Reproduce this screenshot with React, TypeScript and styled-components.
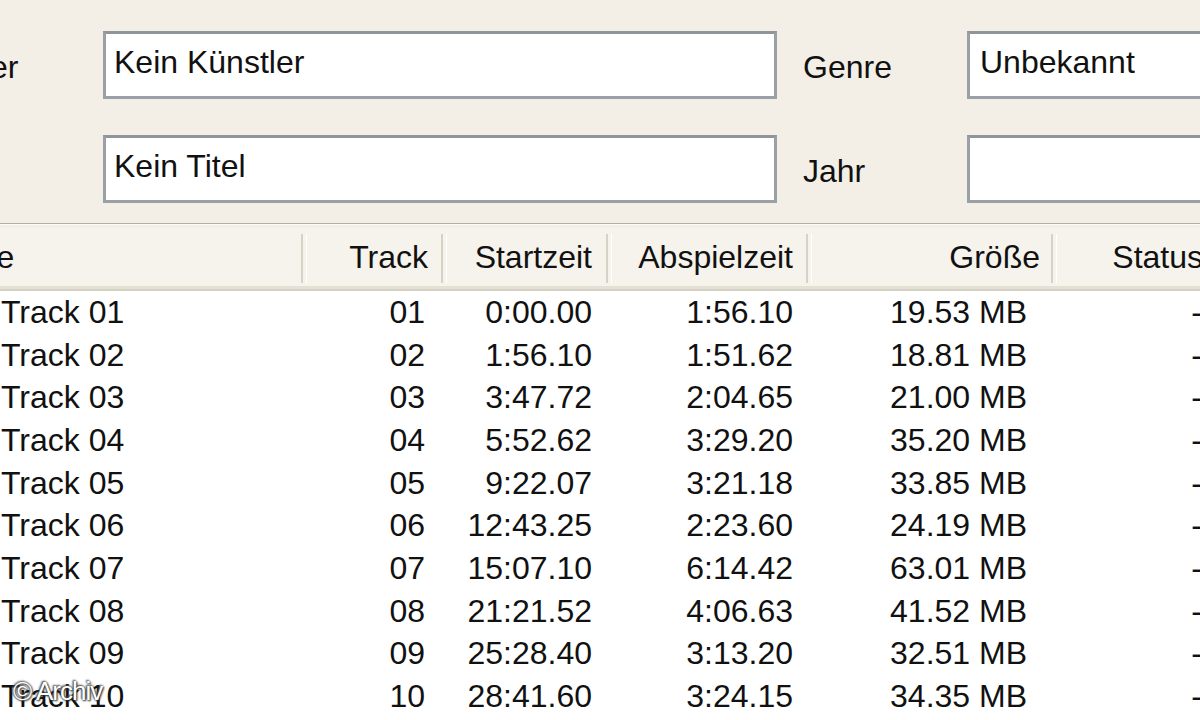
import React from 'react';
import styled, { createGlobalStyle } from 'styled-components';

const GlobalStyle = createGlobalStyle`
  html, body {
    margin: 0;
    padding: 0;
    overflow: hidden;
    background: #f3efe6;
  }
  * {
    box-sizing: border-box;
  }
`;

const Window = styled.div`
  position: relative;
  width: 1200px;
  height: 720px;
  overflow: hidden;
  background: #f3efe6;
  font-family: 'Liberation Sans', Arial, sans-serif;
  font-size: 32px;
  color: #111;
`;

// the screenshot is a crop of a larger dialog, so the content starts left of the viewport
const Content = styled.div`
  width: 1400px;
  margin-left: -160px;
`;

const Form = styled.div`
  display: grid;
  grid-template-columns: 176px 674px 138px 300px;
  grid-auto-rows: 68px;
  column-gap: 26px;
  row-gap: 36px;
  padding: 31px 0 0 61px;
`;

const Label = styled.div`
  display: flex;
  align-items: center;
  padding-top: 4px;
  white-space: nowrap;
`;

const Field = styled.div<{ $pad?: number }>`
  display: flex;
  align-items: center;
  padding: 0 0 6px ${({ $pad }) => $pad ?? 8}px;
  background: #fff;
  border: 3px solid #9aa1a6;
  border-top-color: #8e969c;
  white-space: nowrap;
`;

const Separator = styled.div`
  margin-top: 20px;
  height: 2px;
  background: #b2aea3;
  border-bottom: 1px solid #fbfaf6;
`;

const Table = styled.div`
  margin-top: 3px;
  background: #fff;
`;

const HeaderRow = styled.div`
  display: flex;
  height: 63px;
  background: #f5f3ec;
  border-bottom: 2px solid #d4d0c2;
  box-shadow: inset 0 -3px 0 #e4e0d3;
`;

const HeadCell = styled.div<{ $w: number; $pad: number; $left?: boolean }>`
  position: relative;
  flex: 0 0 ${({ $w }) => $w}px;
  display: flex;
  align-items: center;
  justify-content: ${({ $left }) => ($left ? 'flex-start' : 'flex-end')};
  padding: ${({ $left, $pad }) => ($left ? `0 0 2px ${$pad}px` : `0 ${$pad}px 2px 0`)};
  white-space: nowrap;

  &::after {
    content: '';
    position: absolute;
    top: 6px;
    bottom: 6px;
    right: -2px;
    width: 3px;
    border-left: 2px solid #d6d2c5;
    border-right: 1px solid #ffffff;
  }
`;

const Row = styled.div`
  display: flex;
  height: 42.7px;
  background: #fff;
`;

const Cell = styled.div<{ $w: number; $pad: number; $left?: boolean }>`
  flex: 0 0 ${({ $w }) => $w}px;
  display: flex;
  align-items: center;
  justify-content: ${({ $left }) => ($left ? 'flex-start' : 'flex-end')};
  padding: ${({ $left, $pad }) => ($left ? `0 0 0 ${$pad}px` : `0 ${$pad}px 0 0`)};
  white-space: nowrap;
`;

const Watermark = styled.div`
  position: absolute;
  left: 13px;
  top: 676px;
  font-family: 'Liberation Sans', Arial, sans-serif;
  font-size: 26px;
  letter-spacing: -1px;
  color: #fff;
  text-shadow: 0 0 2px #333, 1px 1px 2px #222, -1px -1px 2px #555;
`;

type Column = { key: string; title: string; width: number; headPad: number; cellPad: number; left?: boolean };

const columns: Column[] = [
  { key: 'name', title: 'Name', width: 465, headPad: 89, cellPad: 161, left: true },
  { key: 'track', title: 'Track', width: 140, headPad: 17, cellPad: 20 },
  { key: 'start', title: 'Startzeit', width: 165, headPad: 18, cellPad: 18 },
  { key: 'length', title: 'Abspielzeit', width: 200, headPad: 17, cellPad: 17 },
  { key: 'size', title: 'Größe', width: 245, headPad: 15, cellPad: 28 },
  { key: 'status', title: 'Status', width: 165, headPad: 17, cellPad: 18 },
];

const tracks = [
  ['01', '0:00.00', '1:56.10', '19.53 MB'],
  ['02', '1:56.10', '1:51.62', '18.81 MB'],
  ['03', '3:47.72', '2:04.65', '21.00 MB'],
  ['04', '5:52.62', '3:29.20', '35.20 MB'],
  ['05', '9:22.07', '3:21.18', '33.85 MB'],
  ['06', '12:43.25', '2:23.60', '24.19 MB'],
  ['07', '15:07.10', '6:14.42', '63.01 MB'],
  ['08', '21:21.52', '4:06.63', '41.52 MB'],
  ['09', '25:28.40', '3:13.20', '32.51 MB'],
  ['10', '28:41.60', '3:24.15', '34.35 MB'],
  ['11', '32:05.75', '2:58.40', '30.02 MB'],
];

export default function App() {
  return (
    <Window>
      <GlobalStyle />
      <Content>
        <Form>
          <Label>Künstler</Label>
          <Field>Kein Künstler</Field>
          <Label>Genre</Label>
          <Field $pad={10}>Unbekannt</Field>
          <Label>Album</Label>
          <Field>Kein Titel</Field>
          <Label>Jahr</Label>
          <Field />
        </Form>
        <Separator />
        <Table>
          <HeaderRow>
            {columns.map((c) => (
              <HeadCell key={c.key} $w={c.width} $pad={c.headPad} $left={c.left}>
                {c.title}
              </HeadCell>
            ))}
          </HeaderRow>
          {tracks.map(([nr, start, length, size]) => {
            const values = [`Track ${nr}`, nr, start, length, size, '-'];
            return (
              <Row key={nr}>
                {columns.map((c, i) => (
                  <Cell key={c.key} $w={c.width} $pad={c.cellPad} $left={c.left}>
                    {values[i]}
                  </Cell>
                ))}
              </Row>
            );
          })}
        </Table>
      </Content>
      <Watermark>© Archiv</Watermark>
    </Window>
  );
}
